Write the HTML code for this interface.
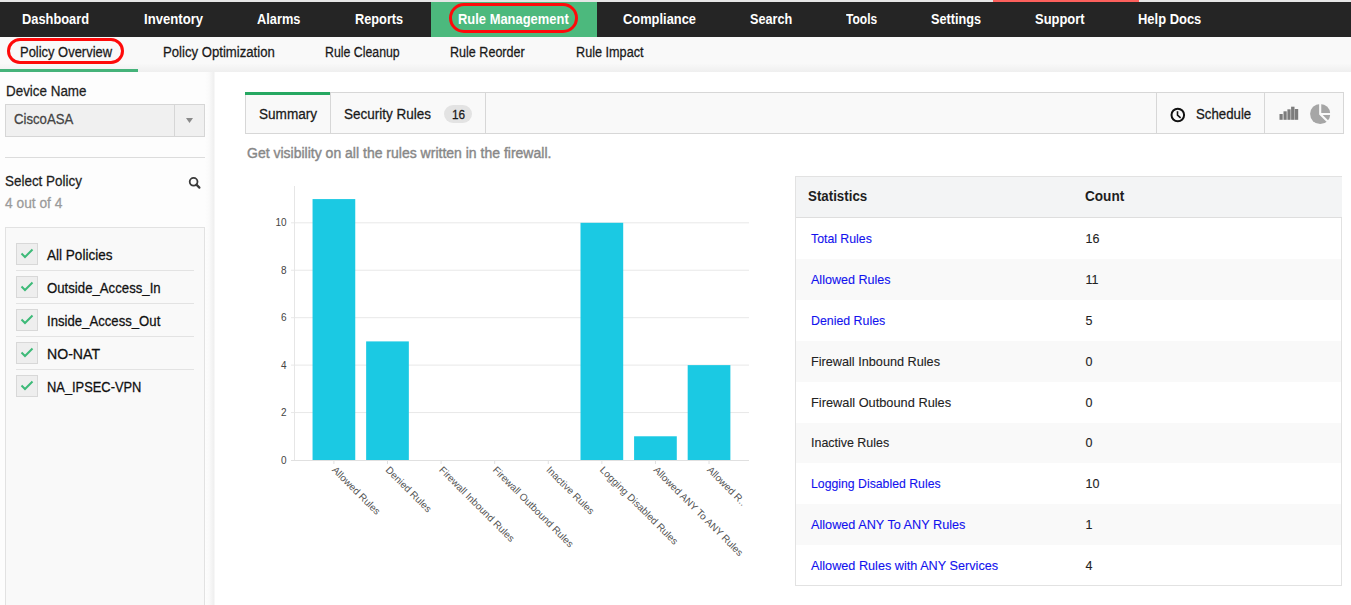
<!DOCTYPE html>
<html><head><meta charset="utf-8"><style>
html,body{margin:0;padding:0;}
body{width:1351px;height:605px;overflow:hidden;position:relative;background:#fff;font-family:"Liberation Sans", sans-serif;}
.t{position:absolute;white-space:nowrap;-webkit-text-stroke:0.25px currentColor;}
</style></head><body>
<div style="position:absolute;left:0px;top:0px;width:1351px;height:2px;background:#e6e6e6"></div>
<div style="position:absolute;left:993px;top:0px;width:146px;height:2px;background:#fd605c"></div>
<div style="position:absolute;left:0px;top:2px;width:1351px;height:34.5px;background:#252525"></div>
<div style="position:absolute;left:431px;top:2px;width:165.5px;height:34.5px;background:#4cb97d"></div>
<div style="position:absolute;left:448.5px;top:2.6px;width:129.5px;height:30.5px;box-sizing:border-box;border:3px solid #ff0a0a;border-radius:16px"></div>
<div class="t" style="left:22.40px;top:13.20px;font-size:13px;line-height:13px;color:#fff;font-weight:bold;transform:scale(0.9882,1.11);transform-origin:0 11.00px;-webkit-text-stroke:0;">Dashboard</div>
<div class="t" style="left:143.90px;top:13.20px;font-size:13px;line-height:13px;color:#fff;font-weight:bold;transform:scale(1.0100,1.11);transform-origin:0 11.00px;-webkit-text-stroke:0;">Inventory</div>
<div class="t" style="left:257.40px;top:13.20px;font-size:13px;line-height:13px;color:#fff;font-weight:bold;transform:scale(0.9868,1.11);transform-origin:0 11.00px;-webkit-text-stroke:0;">Alarms</div>
<div class="t" style="left:355.30px;top:13.20px;font-size:13px;line-height:13px;color:#fff;font-weight:bold;transform:scale(0.9814,1.11);transform-origin:0 11.00px;-webkit-text-stroke:0;">Reports</div>
<div class="t" style="left:458.30px;top:13.20px;font-size:13px;line-height:13px;color:#fff;font-weight:bold;transform:scale(0.9951,1.11);transform-origin:0 11.00px;-webkit-text-stroke:0;">Rule Management</div>
<div class="t" style="left:623.00px;top:13.20px;font-size:13px;line-height:13px;color:#fff;font-weight:bold;transform:scale(0.9907,1.11);transform-origin:0 11.00px;-webkit-text-stroke:0;">Compliance</div>
<div class="t" style="left:749.60px;top:13.20px;font-size:13px;line-height:13px;color:#fff;font-weight:bold;transform:scale(0.9734,1.11);transform-origin:0 11.00px;-webkit-text-stroke:0;">Search</div>
<div class="t" style="left:846.00px;top:13.20px;font-size:13px;line-height:13px;color:#fff;font-weight:bold;transform:scale(0.9259,1.11);transform-origin:0 11.00px;-webkit-text-stroke:0;">Tools</div>
<div class="t" style="left:931.30px;top:13.20px;font-size:13px;line-height:13px;color:#fff;font-weight:bold;transform:scale(0.9769,1.11);transform-origin:0 11.00px;-webkit-text-stroke:0;">Settings</div>
<div class="t" style="left:1035.00px;top:13.20px;font-size:13px;line-height:13px;color:#fff;font-weight:bold;transform:scale(0.9954,1.11);transform-origin:0 11.00px;-webkit-text-stroke:0;">Support</div>
<div class="t" style="left:1138.30px;top:13.20px;font-size:13px;line-height:13px;color:#fff;font-weight:bold;transform:scale(0.9958,1.11);transform-origin:0 11.00px;-webkit-text-stroke:0;">Help Docs</div>
<div style="position:absolute;left:0px;top:36.5px;width:1351px;height:35.5px;background:linear-gradient(#f9f9f9 0,#f9f9f9 75%,#efefef 100%)"></div>
<div class="t" style="left:20.30px;top:45.50px;font-size:13px;line-height:13px;color:#1a1a1a;font-weight:normal;transform:scale(0.9956,1.08);transform-origin:0 11.00px;">Policy Overview</div>
<div class="t" style="left:162.70px;top:45.50px;font-size:13px;line-height:13px;color:#1a1a1a;font-weight:normal;transform:scale(1.0114,1.08);transform-origin:0 11.00px;">Policy Optimization</div>
<div class="t" style="left:324.90px;top:45.50px;font-size:13px;line-height:13px;color:#1a1a1a;font-weight:normal;transform:scale(0.9482,1.08);transform-origin:0 11.00px;">Rule Cleanup</div>
<div class="t" style="left:450.00px;top:45.50px;font-size:13px;line-height:13px;color:#1a1a1a;font-weight:normal;transform:scale(0.9662,1.08);transform-origin:0 11.00px;">Rule Reorder</div>
<div class="t" style="left:575.50px;top:45.50px;font-size:13px;line-height:13px;color:#1a1a1a;font-weight:normal;transform:scale(0.9733,1.08);transform-origin:0 11.00px;">Rule Impact</div>
<div style="position:absolute;left:6.5px;top:37.7px;width:117.5px;height:26.6px;box-sizing:border-box;border:3px solid #ff0a0a;border-radius:14px"></div>
<div style="position:absolute;left:0px;top:69px;width:138px;height:3px;background:#45b37a"></div>
<div style="position:absolute;left:0px;top:72px;width:215px;height:533px;background:linear-gradient(90deg,#fdfdfd 0,#fdfdfd 205px,#fafafa 209px,#efefef 214px,#fff 215px)"></div>
<div class="t" style="left:5.50px;top:84.57px;font-size:13.5px;line-height:13.5px;color:#1e1e1e;font-weight:normal;transform:scale(0.9935,1.08);transform-origin:0 11.43px;">Device Name</div>
<div style="position:absolute;left:5px;top:104px;width:200px;height:32.5px;box-sizing:border-box;background:#f0f0f0;border:1px solid #d6d6d6"></div>
<div style="position:absolute;left:174px;top:104px;width:1px;height:32.5px;background:#d6d6d6"></div>
<div class="t" style="left:14.30px;top:112.87px;font-size:13.5px;line-height:13.5px;color:#444;font-weight:normal;transform:scale(0.9757,1.08);transform-origin:0 11.43px;">CiscoASA</div>
<svg style="position:absolute;left:185px;top:117px" width="9" height="7"><path d="M1 1 L8 1 L4.5 6 Z" fill="#8a8a8a"/></svg>
<div style="position:absolute;left:5px;top:157px;width:200px;height:1px;background:#dcdcdc"></div>
<div class="t" style="left:5.10px;top:175.27px;font-size:13.5px;line-height:13.5px;color:#1e1e1e;font-weight:normal;transform:scale(0.9950,1.08);transform-origin:0 11.43px;">Select Policy</div>
<svg style="position:absolute;left:188px;top:176px" width="14" height="14"><circle cx="5.6" cy="5.8" r="3.9" fill="none" stroke="#3a3a3a" stroke-width="1.8"/><path d="M8.4 8.6 L11.4 11.6" stroke="#3a3a3a" stroke-width="2.2" stroke-linecap="round"/></svg>
<div class="t" style="left:5.10px;top:197.27px;font-size:13.5px;line-height:13.5px;color:#9a9a9a;font-weight:normal;transform:scale(1.0196,1.08);transform-origin:0 11.43px;">4 out of 4</div>
<div style="position:absolute;left:5px;top:227px;width:200px;height:400px;box-sizing:border-box;background:#f9f9f9;border:1px solid #e2e2e2"></div>
<div style="position:absolute;left:16px;top:243.3px;width:21.5px;height:21.5px;box-sizing:border-box;background:#eeeeee;border:1px solid #d8d8d8"></div>
<svg style="position:absolute;left:16px;top:243.3px" width="22" height="22"><path d="M5.5 10.5 L9 14 L16.5 6.5" fill="none" stroke="#3dba78" stroke-width="2"/></svg>
<div class="t" style="left:46.50px;top:248.57px;font-size:13.5px;line-height:13.5px;color:#111;font-weight:normal;transform:scale(1.0035,1.08);transform-origin:0 11.43px;">All Policies</div>
<div style="position:absolute;left:16px;top:270px;width:178px;height:1px;background:#e3e3e3"></div>
<div style="position:absolute;left:16px;top:276.3px;width:21.5px;height:21.5px;box-sizing:border-box;background:#eeeeee;border:1px solid #d8d8d8"></div>
<svg style="position:absolute;left:16px;top:276.3px" width="22" height="22"><path d="M5.5 10.5 L9 14 L16.5 6.5" fill="none" stroke="#3dba78" stroke-width="2"/></svg>
<div class="t" style="left:46.50px;top:281.57px;font-size:13.5px;line-height:13.5px;color:#111;font-weight:normal;transform:scale(0.9775,1.08);transform-origin:0 11.43px;">Outside_Access_In</div>
<div style="position:absolute;left:16px;top:303px;width:178px;height:1px;background:#e3e3e3"></div>
<div style="position:absolute;left:16px;top:309.3px;width:21.5px;height:21.5px;box-sizing:border-box;background:#eeeeee;border:1px solid #d8d8d8"></div>
<svg style="position:absolute;left:16px;top:309.3px" width="22" height="22"><path d="M5.5 10.5 L9 14 L16.5 6.5" fill="none" stroke="#3dba78" stroke-width="2"/></svg>
<div class="t" style="left:46.50px;top:314.57px;font-size:13.5px;line-height:13.5px;color:#111;font-weight:normal;transform:scale(0.9741,1.08);transform-origin:0 11.43px;">Inside_Access_Out</div>
<div style="position:absolute;left:16px;top:336px;width:178px;height:1px;background:#e3e3e3"></div>
<div style="position:absolute;left:16px;top:342.3px;width:21.5px;height:21.5px;box-sizing:border-box;background:#eeeeee;border:1px solid #d8d8d8"></div>
<svg style="position:absolute;left:16px;top:342.3px" width="22" height="22"><path d="M5.5 10.5 L9 14 L16.5 6.5" fill="none" stroke="#3dba78" stroke-width="2"/></svg>
<div class="t" style="left:46.50px;top:347.57px;font-size:13.5px;line-height:13.5px;color:#111;font-weight:normal;transform:scale(1.0444,1.08);transform-origin:0 11.43px;">NO-NAT</div>
<div style="position:absolute;left:16px;top:369px;width:178px;height:1px;background:#e3e3e3"></div>
<div style="position:absolute;left:16px;top:375.3px;width:21.5px;height:21.5px;box-sizing:border-box;background:#eeeeee;border:1px solid #d8d8d8"></div>
<svg style="position:absolute;left:16px;top:375.3px" width="22" height="22"><path d="M5.5 10.5 L9 14 L16.5 6.5" fill="none" stroke="#3dba78" stroke-width="2"/></svg>
<div class="t" style="left:46.50px;top:380.57px;font-size:13.5px;line-height:13.5px;color:#111;font-weight:normal;transform:scale(0.9532,1.08);transform-origin:0 11.43px;">NA_IPSEC-VPN</div>
<div style="position:absolute;left:245px;top:92px;width:1098.5px;height:41.5px;box-sizing:border-box;background:#f9f9f9;border:1px solid #d7d7d7"></div>
<div style="position:absolute;left:245px;top:92px;width:85.5px;height:3px;background:#27a862"></div>
<div style="position:absolute;left:330px;top:92px;width:1px;height:41.5px;background:#d7d7d7"></div>
<div style="position:absolute;left:485px;top:92px;width:1px;height:41.5px;background:#d7d7d7"></div>
<div style="position:absolute;left:1156px;top:92px;width:1px;height:41.5px;background:#d7d7d7"></div>
<div style="position:absolute;left:1264px;top:92px;width:1px;height:41.5px;background:#d7d7d7"></div>
<div class="t" style="left:258.90px;top:107.77px;font-size:13.5px;line-height:13.5px;color:#1a1a1a;font-weight:normal;transform:scale(1.0060,1.08);transform-origin:0 11.43px;">Summary</div>
<div class="t" style="left:343.90px;top:107.77px;font-size:13.5px;line-height:13.5px;color:#1a1a1a;font-weight:normal;transform:scale(1.0008,1.08);transform-origin:0 11.43px;">Security Rules</div>
<div style="position:absolute;left:444px;top:105px;width:28px;height:18px;background:#e3e3e3;border-radius:9px"></div>
<div class="t" style="left:451.70px;top:108.54px;font-size:12px;line-height:12px;color:#1a1a1a;font-weight:normal;transform:scale(0.9817,1.08);transform-origin:0 10.16px;">16</div>
<svg style="position:absolute;left:1168px;top:105px" width="20" height="20"><circle cx="9.8" cy="10" r="6.3" fill="none" stroke="#111" stroke-width="2"/><path d="M9.5 6.2 L9.5 10.2 L12.6 12.8" fill="none" stroke="#111" stroke-width="1.6"/></svg>
<div class="t" style="left:1195.70px;top:108.00px;font-size:13px;line-height:13px;color:#1a1a1a;font-weight:normal;transform:scale(1.0183,1.08);transform-origin:0 11.00px;">Schedule</div>
<svg style="position:absolute;left:1279px;top:106px" width="20" height="14"><rect x="0.5" y="8" width="3.2" height="5.8" fill="#7c7c7c"/><rect x="4.5" y="5.3" width="3.2" height="8.5" fill="#7c7c7c"/><rect x="8.4" y="3.3" width="3.2" height="10.5" fill="#7c7c7c"/><rect x="12.1" y="0.7" width="3.4" height="13.1" fill="#7c7c7c"/><rect x="15.8" y="3" width="3.4" height="10.8" fill="#7c7c7c"/></svg>
<svg style="position:absolute;left:1308px;top:102px" width="24" height="24"><circle cx="12.2" cy="12" r="10.1" fill="#a6a6a6"/><path d="M12.2 0 L12.2 12 L20 19.8" fill="none" stroke="#f9f9f9" stroke-width="2.1"/><path d="M12.2 12 L24 12" stroke="#f9f9f9" stroke-width="2"/></svg>
<div class="t" style="left:246.50px;top:145.95px;font-size:14px;line-height:14px;color:#888;font-weight:normal;transform:scale(1.0005,1.04);transform-origin:0 11.85px;-webkit-text-stroke:0.4px #888;">Get visibility on all the rules written in the firewall.</div>
<svg style="position:absolute;left:0;top:0" width="1351" height="605"><rect x="291" y="412.06" width="458" height="1" fill="#e8e8e8"/><rect x="291" y="364.62" width="458" height="1" fill="#e8e8e8"/><rect x="291" y="317.18" width="458" height="1" fill="#e8e8e8"/><rect x="291" y="269.74" width="458" height="1" fill="#e8e8e8"/><rect x="291" y="222.30" width="458" height="1" fill="#e8e8e8"/><rect x="294" y="186" width="1" height="274.0" fill="#e6e6e6"/><rect x="312.55" y="199.08" width="42.7" height="260.92" fill="#1bc9e3"/><rect x="333.40" y="461.00" width="1" height="3" fill="#e0e0e0"/><text x="331.40" y="470.60" transform="rotate(45 331.40 470.60)" font-size="10" fill="#555" font-family='"Liberation Sans", sans-serif'>Allowed Rules</text><rect x="366.14" y="341.40" width="42.7" height="118.60" fill="#1bc9e3"/><rect x="386.99" y="461.00" width="1" height="3" fill="#e0e0e0"/><text x="384.99" y="470.60" transform="rotate(45 384.99 470.60)" font-size="10" fill="#555" font-family='"Liberation Sans", sans-serif'>Denied Rules</text><rect x="440.58" y="461.00" width="1" height="3" fill="#e0e0e0"/><text x="438.58" y="470.60" transform="rotate(45 438.58 470.60)" font-size="10" fill="#555" font-family='"Liberation Sans", sans-serif'>Firewall Inbound Rules</text><rect x="494.17" y="461.00" width="1" height="3" fill="#e0e0e0"/><text x="492.17" y="470.60" transform="rotate(45 492.17 470.60)" font-size="10" fill="#555" font-family='"Liberation Sans", sans-serif'>Firewall Outbound Rules</text><rect x="547.76" y="461.00" width="1" height="3" fill="#e0e0e0"/><text x="545.76" y="470.60" transform="rotate(45 545.76 470.60)" font-size="10" fill="#555" font-family='"Liberation Sans", sans-serif'>Inactive Rules</text><rect x="580.50" y="222.80" width="42.7" height="237.20" fill="#1bc9e3"/><rect x="601.35" y="461.00" width="1" height="3" fill="#e0e0e0"/><text x="599.35" y="470.60" transform="rotate(45 599.35 470.60)" font-size="10" fill="#555" font-family='"Liberation Sans", sans-serif'>Logging Disabled Rules</text><rect x="634.09" y="436.28" width="42.7" height="23.72" fill="#1bc9e3"/><rect x="654.94" y="461.00" width="1" height="3" fill="#e0e0e0"/><text x="652.94" y="470.60" transform="rotate(45 652.94 470.60)" font-size="10" fill="#555" font-family='"Liberation Sans", sans-serif'>Allowed ANY To ANY Rules</text><rect x="687.68" y="365.12" width="42.7" height="94.88" fill="#1bc9e3"/><rect x="708.53" y="461.00" width="1" height="3" fill="#e0e0e0"/><text x="706.53" y="470.60" transform="rotate(45 706.53 470.60)" font-size="10" fill="#555" font-family='"Liberation Sans", sans-serif'>Allowed R..</text><rect x="291" y="460.00" width="458" height="1" fill="#e0e0e0"/><text x="286.5" y="463.60" text-anchor="end" font-size="10" fill="#444" font-family='"Liberation Sans", sans-serif'>0</text><text x="286.5" y="416.16" text-anchor="end" font-size="10" fill="#444" font-family='"Liberation Sans", sans-serif'>2</text><text x="286.5" y="368.72" text-anchor="end" font-size="10" fill="#444" font-family='"Liberation Sans", sans-serif'>4</text><text x="286.5" y="321.28" text-anchor="end" font-size="10" fill="#444" font-family='"Liberation Sans", sans-serif'>6</text><text x="286.5" y="273.84" text-anchor="end" font-size="10" fill="#444" font-family='"Liberation Sans", sans-serif'>8</text><text x="286.5" y="226.40" text-anchor="end" font-size="10" fill="#444" font-family='"Liberation Sans", sans-serif'>10</text></svg>
<div style="position:absolute;left:795px;top:176px;width:547px;height:410px;box-sizing:border-box;border:1px solid #e2e2e2;background:#fff"></div>
<div style="position:absolute;left:796px;top:177px;width:546px;height:40px;background:#f3f4f5;border-bottom:1px solid #dedede"></div>
<div class="t" style="left:807.60px;top:189.57px;font-size:13.5px;line-height:13.5px;color:#1e1e1e;font-weight:bold;transform:scale(0.9863,1.08);transform-origin:0 11.43px;-webkit-text-stroke:0;">Statistics</div>
<div class="t" style="left:1085.00px;top:189.57px;font-size:13.5px;line-height:13.5px;color:#1e1e1e;font-weight:bold;transform:scale(1.0054,1.08);transform-origin:0 11.43px;-webkit-text-stroke:0;">Count</div>
<div class="t" style="left:811.20px;top:232.92px;font-size:12.5px;line-height:12.5px;color:#1212ee;font-weight:normal;transform:scale(0.9832,1.08);transform-origin:0 10.58px;-webkit-text-stroke:0.1px currentColor;">Total Rules</div>
<div class="t" style="left:1085.50px;top:232.92px;font-size:12.5px;line-height:12.5px;color:#222;font-weight:normal;transform:scale(1.0000,1.08);transform-origin:0 10.58px;-webkit-text-stroke:0.1px currentColor;">16</div>
<div style="position:absolute;left:796px;top:258.9px;width:545px;height:40.9px;background:#f9f9f9"></div>
<div class="t" style="left:811.20px;top:273.82px;font-size:12.5px;line-height:12.5px;color:#1212ee;font-weight:normal;transform:scale(1.0038,1.08);transform-origin:0 10.58px;-webkit-text-stroke:0.1px currentColor;">Allowed Rules</div>
<div class="t" style="left:1085.50px;top:273.82px;font-size:12.5px;line-height:12.5px;color:#222;font-weight:normal;transform:scale(1.0000,1.08);transform-origin:0 10.58px;-webkit-text-stroke:0.1px currentColor;">11</div>
<div class="t" style="left:811.20px;top:314.72px;font-size:12.5px;line-height:12.5px;color:#1212ee;font-weight:normal;transform:scale(0.9888,1.08);transform-origin:0 10.58px;-webkit-text-stroke:0.1px currentColor;">Denied Rules</div>
<div class="t" style="left:1085.50px;top:314.72px;font-size:12.5px;line-height:12.5px;color:#222;font-weight:normal;transform:scale(1.0000,1.08);transform-origin:0 10.58px;-webkit-text-stroke:0.1px currentColor;">5</div>
<div style="position:absolute;left:796px;top:340.7px;width:545px;height:40.9px;background:#f9f9f9"></div>
<div class="t" style="left:811.20px;top:355.62px;font-size:12.5px;line-height:12.5px;color:#222;font-weight:normal;transform:scale(1.0145,1.08);transform-origin:0 10.58px;-webkit-text-stroke:0.1px currentColor;">Firewall Inbound Rules</div>
<div class="t" style="left:1085.50px;top:355.62px;font-size:12.5px;line-height:12.5px;color:#222;font-weight:normal;transform:scale(1.0000,1.08);transform-origin:0 10.58px;-webkit-text-stroke:0.1px currentColor;">0</div>
<div class="t" style="left:811.20px;top:396.52px;font-size:12.5px;line-height:12.5px;color:#222;font-weight:normal;transform:scale(1.0236,1.08);transform-origin:0 10.58px;-webkit-text-stroke:0.1px currentColor;">Firewall Outbound Rules</div>
<div class="t" style="left:1085.50px;top:396.52px;font-size:12.5px;line-height:12.5px;color:#222;font-weight:normal;transform:scale(1.0000,1.08);transform-origin:0 10.58px;-webkit-text-stroke:0.1px currentColor;">0</div>
<div style="position:absolute;left:796px;top:422.5px;width:545px;height:40.9px;background:#f9f9f9"></div>
<div class="t" style="left:811.20px;top:437.42px;font-size:12.5px;line-height:12.5px;color:#222;font-weight:normal;transform:scale(0.9960,1.08);transform-origin:0 10.58px;-webkit-text-stroke:0.1px currentColor;">Inactive Rules</div>
<div class="t" style="left:1085.50px;top:437.42px;font-size:12.5px;line-height:12.5px;color:#222;font-weight:normal;transform:scale(1.0000,1.08);transform-origin:0 10.58px;-webkit-text-stroke:0.1px currentColor;">0</div>
<div class="t" style="left:811.20px;top:478.32px;font-size:12.5px;line-height:12.5px;color:#1212ee;font-weight:normal;transform:scale(0.9815,1.08);transform-origin:0 10.58px;-webkit-text-stroke:0.1px currentColor;">Logging Disabled Rules</div>
<div class="t" style="left:1085.50px;top:478.32px;font-size:12.5px;line-height:12.5px;color:#222;font-weight:normal;transform:scale(1.0000,1.08);transform-origin:0 10.58px;-webkit-text-stroke:0.1px currentColor;">10</div>
<div style="position:absolute;left:796px;top:504.3px;width:545px;height:40.9px;background:#f9f9f9"></div>
<div class="t" style="left:811.20px;top:519.22px;font-size:12.5px;line-height:12.5px;color:#1212ee;font-weight:normal;transform:scale(1.0146,1.08);transform-origin:0 10.58px;-webkit-text-stroke:0.1px currentColor;">Allowed ANY To ANY Rules</div>
<div class="t" style="left:1085.50px;top:519.22px;font-size:12.5px;line-height:12.5px;color:#222;font-weight:normal;transform:scale(1.0000,1.08);transform-origin:0 10.58px;-webkit-text-stroke:0.1px currentColor;">1</div>
<div class="t" style="left:811.20px;top:560.12px;font-size:12.5px;line-height:12.5px;color:#1212ee;font-weight:normal;transform:scale(1.0137,1.08);transform-origin:0 10.58px;-webkit-text-stroke:0.1px currentColor;">Allowed Rules with ANY Services</div>
<div class="t" style="left:1085.50px;top:560.12px;font-size:12.5px;line-height:12.5px;color:#222;font-weight:normal;transform:scale(1.0000,1.08);transform-origin:0 10.58px;-webkit-text-stroke:0.1px currentColor;">4</div>
</body></html>
